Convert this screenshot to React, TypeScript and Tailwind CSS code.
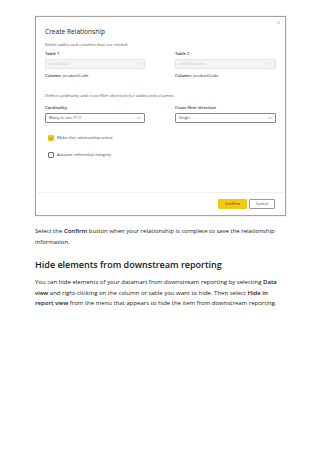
import { Check, ChevronDown, X } from 'lucide-react'

function Select({ value, disabled }: { value: string; disabled?: boolean }) {
  return (
    <div
      className={
        'flex h-[10px] items-center justify-between rounded-[1px] border px-[3px] text-[4px] ' +
        (disabled ? 'border-[#e6e6e6] bg-[#f3f3f3] text-[#c8c8c8]' : 'border-[#8a8a8a] bg-white text-[#444]')
      }
    >
      <span>{value}</span>
      <ChevronDown className={'h-[4px] w-[4px] ' + (disabled ? 'text-[#bbb]' : 'text-[#555]')} strokeWidth={3} />
    </div>
  )
}

function CheckRow({ label, checked }: { label: string; checked?: boolean }) {
  return (
    <div className="flex items-center gap-[3px] pl-[3px]">
      <div
        className={
          'flex h-[6px] w-[6px] items-center justify-center rounded-[1px] border ' +
          (checked ? 'border-[#f2c811] bg-[#f2c811]' : 'border-[#777] bg-white')
        }
      >
        {checked && <Check className="h-[5px] w-[5px] text-[#333]" strokeWidth={3} />}
      </div>
      <span className="text-[4.2px] text-[#444]">{label}</span>
    </div>
  )
}

function Dialog() {
  return (
    <div className="relative ml-[35px] mt-[16px] flex h-[200px] w-[251px] flex-col border border-[#a3a3a3] bg-white shadow-[0_0_1px_rgba(0,0,0,0.3)]">
      <X className="absolute right-[4px] top-[3px] h-[5px] w-[5px] text-[#777]" strokeWidth={1.5} />
      <div className="flex-1 px-[9px] pt-[10px] text-[#333]">
        <p className="text-[6.6px] leading-[10px] text-[#252423]">Create Relationship</p>
        <p className="mt-[5px] text-[4.2px] leading-[6px] text-[#555]">Select tables and columns that are related.</p>
        <div className="mt-[3px] grid grid-cols-[100px_101px] gap-x-[30px]">
          <div>
            <p className="text-[4.2px] font-semibold leading-[6px]">Table 1</p>
            <div className="mt-[2px]">
              <Select value="retailSales" disabled />
            </div>
            <p className="mt-[4px] text-[4.2px] leading-[6px]">
              <span className="font-semibold">Column:</span> productCode
            </p>
          </div>
          <div>
            <p className="text-[4.2px] font-semibold leading-[6px]">Table 2</p>
            <div className="mt-[2px]">
              <Select value="retailProducts" disabled />
            </div>
            <p className="mt-[4px] text-[4.2px] leading-[6px]">
              <span className="font-semibold">Column:</span> productCode
            </p>
          </div>
        </div>
        <p className="mt-[14px] text-[4.2px] leading-[6px] text-[#555]">
          Define cardinality and cross filter direction for tables and columns
        </p>
        <div className="mt-[6px] grid grid-cols-[100px_101px] gap-x-[30px]">
          <div>
            <p className="text-[4.2px] font-semibold leading-[6px]">Cardinality</p>
            <div className="mt-[2px]">
              <Select value="Many to one (*:1)" />
            </div>
          </div>
          <div>
            <p className="text-[4.2px] font-semibold leading-[6px]">Cross filter direction</p>
            <div className="mt-[2px]">
              <Select value="Single" />
            </div>
          </div>
        </div>
        <div className="mt-[12px] flex flex-col gap-[11px]">
          <CheckRow label="Make this relationship active" checked />
          <CheckRow label="Assume referential integrity" />
        </div>
      </div>
      <div className="mx-[1px] flex justify-end gap-[2px] border-t border-[#f0f0f0] px-[9px] pb-[6px] pt-[6px]">
        <button className="h-[10px] w-[29px] rounded-[1px] bg-[#f2c811] text-[4px] text-[#333]">Confirm</button>
        <button className="h-[10px] w-[26px] rounded-[1px] border border-[#999] bg-white text-[4px] text-[#333]">
          Cancel
        </button>
      </div>
    </div>
  )
}

export default function App() {
  return (
    <div className="h-[453px] w-[320px] bg-white" style={{ fontFamily: '"Open Sans", "Noto Sans", sans-serif' }}>
      <Dialog />
      <div className="px-[35px] text-[#171717]">
        <p className="mt-[10px] text-[6px] leading-[10.5px]">
          Select the <span className="font-semibold">Confirm</span> button when your relationship is complete to save the
          relationship information.
        </p>
        <h2 className="mt-[11px] text-[9px] font-semibold leading-[13px]">Hide elements from downstream reporting</h2>
        <p className="mt-[6px] text-[6px] leading-[10.5px]">
          You can hide elements of your datamart from downstream reporting by selecting{' '}
          <span className="font-semibold">Data view</span> and right-clicking on the column or table you want to hide.
          Then select <span className="font-semibold">Hide in report view</span> from the menu that appears to hide the
          item from downstream reporting.
        </p>
      </div>
    </div>
  )
}
